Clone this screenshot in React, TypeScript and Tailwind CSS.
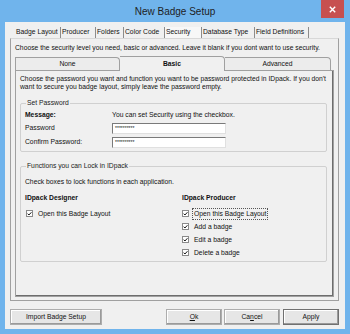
import React from "react";

const font = { fontFamily: '"Liberation Sans", Arial, sans-serif' };

function Check({ checked = true }: { checked?: boolean }) {
  return (
    <span className="inline-flex w-[7px] h-[7px] border border-[#8a8a8a] bg-white items-center justify-center shrink-0">
      {checked && (
        <svg width="6" height="6" viewBox="0 0 6 6">
          <path d="M0.8 2.6 L2.3 4.2 L5.3 0.9" stroke="#111" strokeWidth="1.2" fill="none" />
        </svg>
      )}
    </span>
  );
}

function CheckRow({ label, focus = false }: { label: string; focus?: boolean }) {
  return (
    <div className="flex items-center h-[13px]">
      <Check />
      <span className={`ml-[3px] px-[1px] leading-[10px] ${focus ? "border border-dotted border-[#555]" : "border border-transparent"}`}>
        {label}
      </span>
    </div>
  );
}

function Btn({ children, w, def = false }: { children: React.ReactNode; w: string; def?: boolean }) {
  return (
    <div
      className={`${w} h-[16px] flex items-center justify-center bg-[#e6e6e6] border ${def ? "border-[#707070]" : "border-[#adadad]"} shadow-[inset_-1px_-1px_0_#9a9a9a,inset_1px_1px_0_#fff]`}
    >
      {children}
    </div>
  );
}

export default function App() {
  const outerTabs: [string, string][] = [
    ["Badge Layout", "w-[46px]"],
    ["Producer", "w-[35px]"],
    ["Folders", "w-[28px]"],
    ["Color Code", "w-[41px]"],
    ["Security", "w-[37px]"],
    ["Database Type", "w-[53px]"],
    ["Field Definitions", "w-[54px]"],
  ];
  return (
    <div className="w-[350px] h-[334px] bg-[#70b4ec] flex flex-col text-[6.75px] text-[#111] overflow-hidden" style={font}>
      {/* title bar */}
      <div className="h-[22px] relative flex items-center justify-center shrink-0">
        <span className="text-[10px] text-[#1e1e1e] mt-[1px]">New Badge Setup</span>
        <div className="absolute right-[6px] top-0 w-[23px] h-[18px] bg-[#c75050] flex items-center justify-center">
          <svg width="7" height="7" viewBox="0 0 7 7">
            <path d="M0.8 0.8 L6.2 6.2 M6.2 0.8 L0.8 6.2" stroke="#fff" strokeWidth="1.4" />
          </svg>
        </div>
      </div>
      {/* client */}
      <div className="mx-[5px] h-[307px] bg-[#f0f0f0] flex flex-col">
        {/* outer tabs */}
        <div className="mt-[5px] ml-[10px] h-[11px] flex items-end">
          {outerTabs.map(([t, w]) => (
            <div key={t} className={`${w} h-[11px] flex items-center border-r border-[#8c8c8c] pl-[1px] leading-none whitespace-nowrap ${t === "Security" ? "bg-[#f7f7f7]" : ""}`}>
              {t}
            </div>
          ))}
        </div>
        {/* outer panel */}
        <div className="ml-[5px] w-[329px] h-[263px] border border-[#a0a0a0] border-t-[#d8d8d8] flex flex-col">
          <div className="mt-[4px] ml-[4px] h-[9px] leading-[9px] whitespace-nowrap">
            Choose the security level you need, basic or advanced. Leave it blank if you dont want to use security.
          </div>
          {/* inner tabs */}
          <div className="ml-[4px] mt-[3px] h-[15px] flex items-end">
            <div className="w-[105px] h-[13px] border border-b-0 border-[#a0a0a0] rounded-tr-[4px] flex items-center justify-center bg-[#ececec]">
              None
            </div>
            <div className="w-[105px] h-[15px] border-t border-[#a0a0a0] rounded-tr-[4px] border-r flex items-center justify-center font-bold bg-[#f0f0f0] relative top-[1px]">
              Basic
            </div>
            <div className="w-[106px] h-[13px] border border-b-0 border-l-0 border-[#a0a0a0] rounded-tr-[4px] flex items-center justify-center bg-[#ececec]">
              Advanced
            </div>
          </div>
          <div className="ml-[4px] w-[319px] h-[227px] border border-[#a0a0a0] shadow-[inset_-1px_-1px_0_#6d6d6d] flex flex-col px-[4px]">
            <div className="mt-[4px] leading-[8px]">
              Choose the password you want and function you want to be password protected in IDpack. If you don't want to secure you badge layout, simply leave the password empty.
            </div>
            {/* Set Password group */}
            <fieldset className="mt-[8px] w-[307px] h-[53px] border border-[#d0d0d0] rounded-[2px] px-[4px]">
              <legend className="px-[1px] ml-[1px] leading-[8px] text-[#222]">Set Password</legend>
              <div className="flex items-center h-[10px] mt-[3px]">
                <span className="w-[87px] font-bold">Message:</span>
                <span>You can set Security using the checkbox.</span>
              </div>
              <div className="flex items-center h-[13px] mt-[2px]">
                <span className="w-[87px]">Password</span>
                <div className="w-[114px] h-[11px] bg-white border border-[#7a7a7a] border-r-[#e0e0e0] border-b-[#e0e0e0] flex items-center pl-[2px] text-[5px] leading-none">
                  **********
                </div>
              </div>
              <div className="flex items-center h-[14px]">
                <span className="w-[87px]">Confirm Password:</span>
                <div className="w-[114px] h-[11px] bg-white border border-[#7a7a7a] border-r-[#e0e0e0] border-b-[#e0e0e0] flex items-center pl-[2px] text-[5px] leading-none">
                  **********
                </div>
              </div>
            </fieldset>
            {/* Functions group */}
            <fieldset className="mt-[10px] w-[307px] h-[100px] border border-[#d0d0d0] rounded-[2px] px-[4px]">
              <legend className="px-[1px] ml-[1px] leading-[8px] text-[#222]">Functions you can Lock in IDpack</legend>
              <div className="mt-[7px] leading-[9px]">Check boxes to lock functions in each application.</div>
              <div className="flex mt-[7px]">
                <div className="w-[157px] flex flex-col">
                  <div className="font-bold h-[10px] leading-[10px] mb-[4px]">IDpack Designer</div>
                  <div className="ml-[1px]">
                    <CheckRow label="Open this Badge Layout" />
                  </div>
                </div>
                <div className="flex flex-col">
                  <div className="font-bold h-[10px] leading-[10px] mb-[4px]">IDpack Producer</div>
                  <CheckRow label="Open this Badge Layout" focus />
                  <CheckRow label="Add a badge" />
                  <CheckRow label="Edit a badge" />
                  <CheckRow label="Delete a badge" />
                </div>
              </div>
            </fieldset>
          </div>
        </div>
        {/* buttons */}
        <div className="mt-[8px] ml-[5px] flex items-center">
          <Btn w="w-[92px]">Import Badge Setup</Btn>
          <div className="w-[64px]" />
          <Btn w="w-[56px]">
            <span><span className="underline">O</span>k</span>
          </Btn>
          <div className="w-[2px]" />
          <Btn w="w-[56px]">
            <span>Ca<span className="underline">n</span>cel</span>
          </Btn>
          <div className="w-[3px]" />
          <Btn w="w-[56px]" def>
            Apply
          </Btn>
        </div>
      </div>
    </div>
  );
}
